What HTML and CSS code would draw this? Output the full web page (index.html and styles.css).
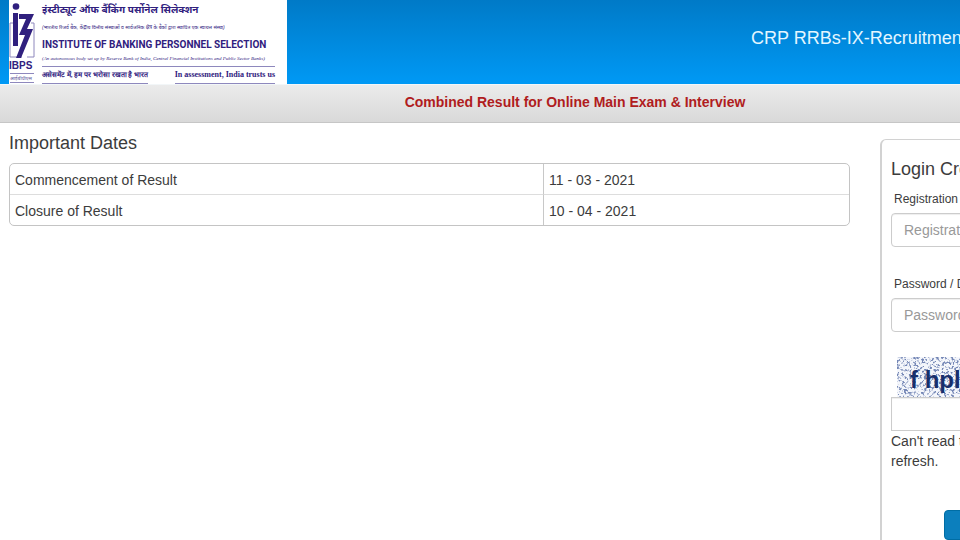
FILE: index.html
```html
<!DOCTYPE html>
<html lang="en">

<head>
    <meta charset="UTF-8">
    <meta name="viewport" content="width=device-width, initial-scale=1.0">
    <title>CRP RRBs-IX-Recruitment</title>
    <link rel="stylesheet" href="styles.css">
</head>

<body>
    <div class="page">
        <header class="header">
            <div class="logo">
                <svg class="logo-mark" viewBox="0 0 26 84" width="26" height="84">
                    <path d="M1 23H4M22 23H25V57H18M1 23V57H13" fill="none" stroke="#8e88bd"/>
                    <circle cx="7" cy="6.500" r="3.300" fill="#30207e"/>
                    <path d="M4 13H9V46H4Z" fill="#30207e"/>
                    <path d="M10 14H25L18 29H24L12 58H7L16 35H10L17 19H10Z" fill="#30207e"/>
                    <text x="0" y="69" class="mark-name">IBPS</text>
                    <path d="M1 73.500H25M1 82.500H25" stroke="#8e88bd"/>
                    <text x="1" y="80" class="mark-hindi">आईबीपीएस</text>
                </svg>
                <div class="logo-text">
                    <div class="logo-hindi">इंस्टीट्यूट ऑफ बैंकिंग पर्सोनेल सिलेक्शन</div>
                    <div class="logo-hindi-note">(भारतीय रिजर्व बैंक, केंद्रीय वित्तीय संस्थाओं व सार्वजनिक क्षेत्र के बैंकों द्वारा स्थापित एक स्वायत्त संस्था)</div>
                    <div class="logo-name">INSTITUTE OF BANKING PERSONNEL SELECTION</div>
                    <div class="logo-note">(An autonomous body set up by Reserve Bank of India, Central Financial Institutions and Public Sector Banks)</div>
                    <div class="logo-motto">
                        <span class="motto-hindi">असेसमेंट में, हम पर भरोसा रखता है भारत</span>
                        <span>In assessment, India trusts us</span>
                    </div>
                </div>
            </div>
            <h1 class="title">CRP RRBs-IX-Recruitment</h1>
        </header>

        <div class="band">Combined Result for Online Main Exam &amp; Interview</div>

        <div class="content">
            <main class="dates">
                <h2>Important Dates</h2>
                <table class="dates-table">
                    <tr>
                        <td class="event">Commencement of Result</td>
                        <td>11 - 03 - 2021</td>
                    </tr>
                    <tr>
                        <td class="event">Closure of Result</td>
                        <td>10 - 04 - 2021</td>
                    </tr>
                </table>
            </main>

            <form class="login">
                <h2>Login Credentials</h2>
                <label for="regno">Registration No</label>
                <input id="regno" type="text" placeholder="Registration No">
                <label for="password">Password / DOB</label>
                <input id="password" type="password" placeholder="Password">
                <svg class="captcha" viewBox="0 0 150 40" width="150" height="40">
                    <filter id="noise" x="0" y="0" width="100%" height="100%" color-interpolation-filters="sRGB">
                        <feTurbulence type="fractalNoise" baseFrequency="0.4" numOctaves="2" seed="7"/>
                        <feColorMatrix values="0 0 0 0 0.25  0 0 0 0 0.35  0 0 0 0 0.6  6 0 0 0 -3"/>
                    </filter>
                    <rect width="150" height="40" fill="#f4f6fb"/>
                    <rect width="150" height="40" filter="url(#noise)" opacity="0.7"/>
                    <text x="13" y="31" class="captcha-text">f hplk</text>
                </svg>
                <input id="captcha" class="captcha-input" type="text" aria-label="Captcha">
                <p>Can't read the image? click here to refresh.</p>
                <button type="submit">Login</button>
            </form>
        </div>
    </div>
</body>

</html>
```

FILE: styles.css
```css
body{
    margin: 0;
    overflow: hidden;
    background: #fff;
    color: #3c3c3c;
    font-family: "Liberation Sans", Arial, "Noto Sans", sans-serif;
    font-size: 14px;
    line-height: 20px;
}
.page{
    min-width: 1150px;
}
h1, h2, p{
    margin: 0;
}
h1, h2{
    font-size: 18px;
    font-weight: normal;
    line-height: 20px;
}

/* header */
.header{
    display: flex;
    align-items: center;
    justify-content: space-between;
    height: 84px;
    padding: 0 199px 0 9px;
    background: linear-gradient(#007ac7, #0099f5);
}
.title{
    flex: none;
    width: 200px;
    margin-bottom: 8px;
    color: #e4f6ff;
    white-space: nowrap;
}
.logo{
    display: flex;
    gap: 7px;
    width: 278px;
    height: 84px;
    overflow: hidden;
    background: #fff;
    color: #30207e;
}
.logo-mark{
    flex: none;
}
.mark-name{
    font-size: 10px;
    font-weight: bold;
    fill: #30207e;
}
.mark-hindi{
    font-size: 5px;
    fill: #5d5599;
}
.logo-text{
    width: 233px;
    white-space: nowrap;
}
.logo-hindi{
    font-size: 10px;
    font-weight: bold;
    line-height: 20px;
}
.logo-hindi-note{
    font-size: 5px;
    font-style: italic;
    line-height: 14px;
}
.logo-name{
    font-family: Roboto, "Liberation Sans", Arial, sans-serif;
    font-size: 10px;
    font-weight: bold;
    line-height: 22px;
}
.logo-note{
    font-family: "Liberation Serif", "Times New Roman", serif;
    font-size: 5px;
    font-style: italic;
    line-height: 6px;
    padding-bottom: 4px;
}
.logo-motto{
    display: flex;
    justify-content: space-between;
    border-top: 1px solid #8e88bd;
    font-family: "Liberation Serif", "Times New Roman", serif;
    font-size: 8px;
    font-weight: bold;
    line-height: 16px;
}
.logo-motto span{
    border-bottom: 1px solid #8e88bd;
}
.logo-motto .motto-hindi{
    font-size: 7px;
}

/* grey band */
.band{
    padding: 7px 0 10px;
    border-top: 1px solid #f2f6f8;
    border-bottom: 1px solid #c6c6c6;
    background: linear-gradient(#ebebeb, #d9d9d9);
    color: #b01c20;
    font-weight: bold;
    text-align: center;
}

/* content */
.content{
    display: flex;
    align-items: flex-start;
    gap: 30px;
    padding: 10px 9px 0;
}
.dates{
    flex: 1;
}
.dates-table{
    width: 100%;
    margin-top: 10px;
    border: 1px solid #c4c4c4;
    border-radius: 5px;
    border-spacing: 0;
}
.dates-table td{
    padding: 6px 5px 4px;
}
.dates-table tr + tr td{
    border-top: 1px solid #ddd;
}
.dates-table .event{
    width: 523px;
    border-right: 1px solid #c8c8c8;
}

/* login */
.login{
    display: flex;
    flex-direction: column;
    align-items: flex-start;
    width: 240px;
    margin-top: 6px;
    padding: 19px 9px 20px;
    border: 1px solid #d2d2d2;
    border-left-width: 2px;
    border-radius: 6px;
}
.login label{
    padding: 10px 0 4px 3px;
    font-size: 12px;
}
.login input{
    box-sizing: border-box;
    width: 100%;
    height: 34px;
    padding: 6px 12px;
    border: 1px solid #ccc;
    border-radius: 4px;
    font-family: inherit;
    font-size: 14px;
    box-shadow: inset 0 1px 1px rgba(0, 0, 0, 0.07);
}
.login input::placeholder{
    color: #999;
}
#regno{
    margin-bottom: 17px;
}
.captcha{
    margin: 25px 0 0 6px;
}
.captcha-text{
    font-size: 24px;
    font-weight: bold;
    fill: #172f6c;
}
.login .captcha-input{
    border-radius: 0;
}
.login button{
    width: 130px;
    height: 30px;
    margin: 39px 0 0 53px;
    border: 1px solid #006da4;
    border-radius: 4px;
    background: #0c7fbd;
    color: #fff;
    font-family: inherit;
    font-size: 14px;
}
```
